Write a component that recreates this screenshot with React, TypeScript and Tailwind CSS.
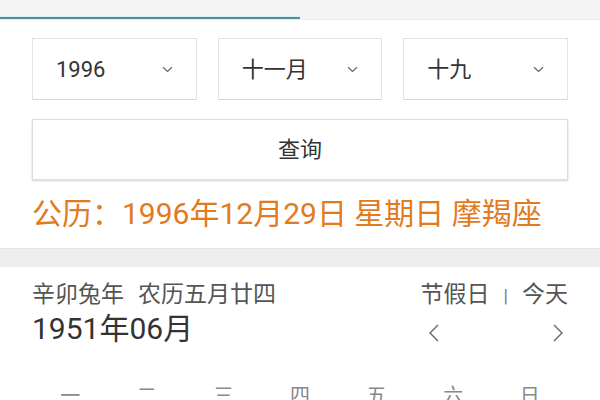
const weekdays = ["一", "二", "三", "四", "五", "六", "日"];

const Chevron = () => (
  <svg width="11" height="7" viewBox="0 0 11 7" fill="none">
    <path d="M1 1.2 L5.5 5.5 L10 1.2" stroke="#666" strokeWidth="1.2" />
  </svg>
);

const Select = ({ label }: { label: string }) => (
  <div className="flex-1 h-[62px] flex items-center justify-between pl-[23px] pr-[23px] border border-[#e2e2e2] border-b-[#d6d6d6] bg-white">
    <span className="text-[22px] text-[#333]">{label}</span>
    <Chevron />
  </div>
);

export default function App() {
  return (
    <div
      className="w-[600px] h-[400px] overflow-hidden bg-white"
      style={{ fontFamily: '"Roboto", "Noto Sans CJK SC", sans-serif' }}
    >
      {/* tab strip */}
      <div className="h-[20px] bg-[#f4f4f4] border-b border-[#ececec] flex items-end">
        <div className="w-[300px] h-[3px] border-t border-[#d6f3f6] bg-[#5b8b95]" />
      </div>

      <div className="px-8 pt-[18px]">
        <div className="flex gap-[21px]">
          <Select label="1996" />
          <Select label="十一月" />
          <Select label="十九" />
        </div>

        <button
          type="button"
          className="mt-[19px] w-full h-[61px] flex items-center justify-center border border-[#dedede] bg-white shadow-[0_1px_2px_rgba(0,0,0,0.18)] text-[22px] text-[#333]"
        >
          查询
        </button>

        <p className="mt-[16px] text-[30px] leading-[36px] text-[#e27a1e]">
          公历：1996年12月29日 星期日 摩羯座
        </p>
      </div>

      <div className="mt-[16px] h-[19px] bg-[#eeeeee] border-t border-[#e6e6e6]" />

      <div className="px-8 pt-[13px]">
        <div className="flex justify-between">
          <div className="flex flex-col">
            <span className="text-[23px] leading-[30px] text-[#555]">
              辛卯兔年<span className="ml-[14px]">农历五月廿四</span>
            </span>
            <span className="text-[30px] leading-[38px] text-[#333]">1951年06月</span>
          </div>
          <div className="flex flex-col items-end w-[150px]">
            <span className="text-[23px] leading-[30px] text-[#555]">
              节假日<span className="mx-[14px] text-[18px] text-[#777]">|</span>今天
            </span>
            <div className="flex w-full justify-between pl-[10px] pr-[4px] mt-[12px]">
              <svg width="12" height="20" viewBox="0 0 12 20" fill="none">
                <path d="M10 2 L2 10 L10 18" stroke="#666" strokeWidth="1.4" />
              </svg>
              <svg width="12" height="20" viewBox="0 0 12 20" fill="none">
                <path d="M2 2 L10 10 L2 18" stroke="#666" strokeWidth="1.4" />
              </svg>
            </div>
          </div>
        </div>

        <div className="grid grid-cols-7 mt-[34px]">
          {weekdays.map((d) => (
            <span key={d} className="text-center text-[20px] leading-[28px] text-[#888]">
              {d}
            </span>
          ))}
        </div>
      </div>
    </div>
  );
}
